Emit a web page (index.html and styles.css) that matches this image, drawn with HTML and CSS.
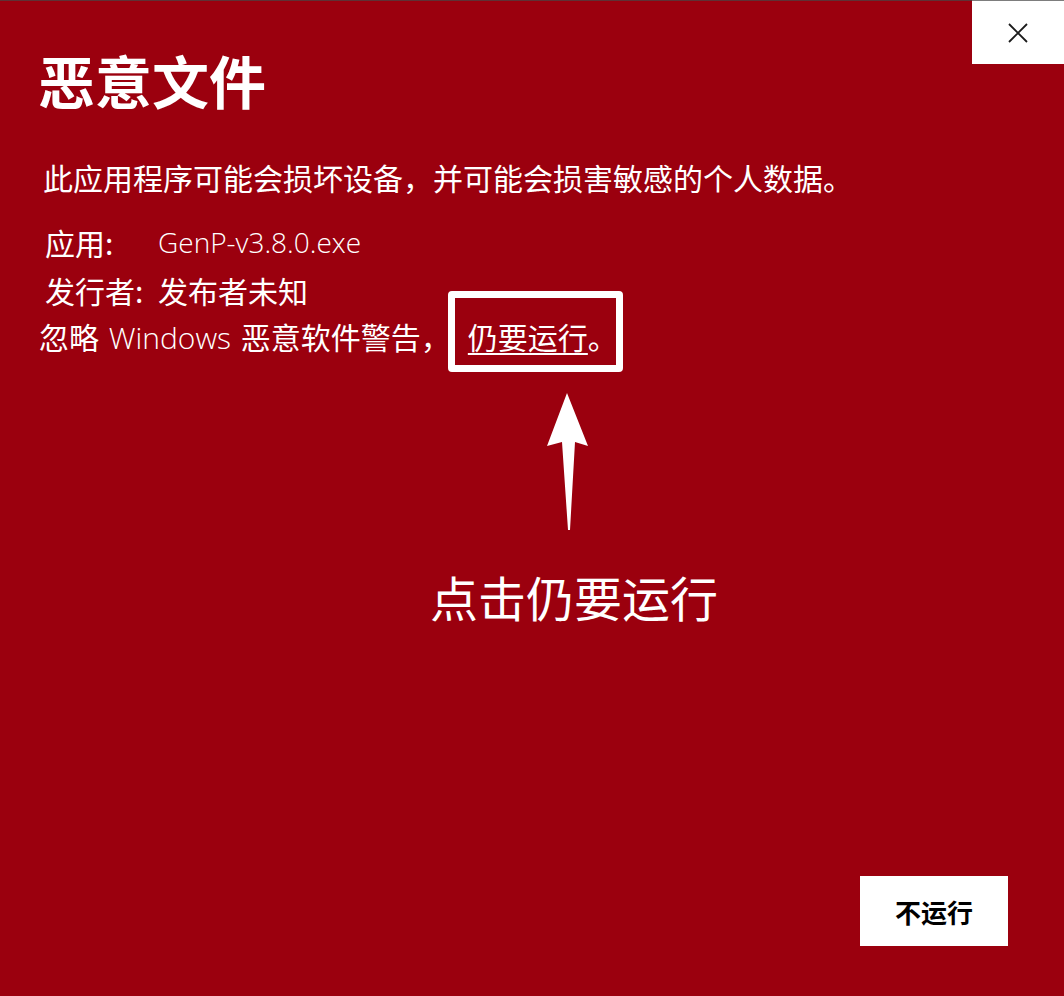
FILE: index.html
```html
<!DOCTYPE html>
<html lang="zh-CN">
<head>
<meta charset="utf-8">
<title>恶意文件</title>
<link rel="stylesheet" href="styles.css">
</head>
<body>
<div class="dialog">
  <button class="close" aria-label="关闭">
    <svg width="20" height="20" viewBox="0 0 20 20"><path d="M1 1 L19 19 M19 1 L1 19" stroke="#1b1b1b" stroke-width="1.8" fill="none"/></svg>
  </button>
  <h1 class="title">恶意文件</h1>
  <p class="subtitle">此应用程序可能会损坏设备，并可能会损害敏感的个人数据。</p>
  <div class="info">
    <span class="label">应用:</span><span class="value latin">GenP-v3.8.0.exe</span>
    <span class="label">发行者:</span><span class="value">发布者未知</span>
  </div>
  <p class="ignore">忽略 <span class="latin">Windows</span> 恶意软件警告，<span class="hl"><a class="run">仍要运行</a>。<span class="hlbox"></span></span></p>
  <svg class="arrow" width="46" height="142" viewBox="0 0 46 142"><path d="M22 3 L43 56 L30 52 L25 140 L23 140 L17 52 L2 56 Z" fill="#fff"/></svg>
  <p class="hint">点击仍要运行</p>
  <div class="actions">
    <button class="norun">不运行</button>
  </div>
</div>
</body>
</html>
```
FILE: styles.css
```css
html, body {
  margin: 0;
  padding: 0;
}
body {
  background: #9b000e;
  font-family: "Noto Sans CJK SC", "Noto Sans", sans-serif;
  color: #fff;
}
.dialog {
  position: relative;
  width: 1064px;
  height: 996px;
  box-sizing: border-box;
  border-top: 1px solid #5f3135;
  background: #9b000e;
  display: flex;
  flex-direction: column;
}
.close {
  position: absolute;
  top: -1px;
  right: 0;
  width: 92px;
  height: 64px;
  border: 0;
  border-top: 1px solid #7d7d7d;
  background: #fff;
  padding: 0;
  display: flex;
  align-items: center;
  justify-content: center;
}
.title {
  margin: 0;
  padding: 45px 0 0 38px;
  font-size: 57px;
  line-height: 66px;
  font-weight: 700;
}
.subtitle {
  margin: 45px 0 0 43px;
  font-size: 30px;
  line-height: 40px;
}
.info {
  margin: 21px 0 0 45px;
  display: grid;
  grid-template-columns: 113px auto;
  font-size: 30px;
  line-height: 48px;
}
.latin {
  font-family: "Open Sans", "Noto Sans", sans-serif;
  font-weight: 300;
}
.info .latin {
  font-size: 28px;
}
.ignore {
  margin: -2px 0 0 39px;
  font-size: 30px;
  line-height: 48px;
}
.ignore .latin {
  font-size: 30px;
  margin: 0 3px;
}
.hl {
  position: relative;
  margin-left: 17px;
}
.run {
  text-decoration: underline;
  text-underline-offset: 4px;
  text-decoration-thickness: 2px;
}
.hlbox {
  position: absolute;
  left: -20px;
  top: -23px;
  width: 161px;
  height: 67px;
  border: 7px solid #fff;
  border-radius: 4px;
}
.arrow {
  display: block;
  margin: 28px 0 0 545px;
}
.hint {
  margin: 34px 0 0 430px;
  font-size: 48px;
  line-height: 60px;
}
.actions {
  margin-top: auto;
  padding: 0 56px 50px 0;
  display: flex;
  justify-content: flex-end;
}
.norun {
  width: 148px;
  height: 70px;
  border: 0;
  background: #fff;
  color: #000;
  font-family: "Noto Sans CJK SC", sans-serif;
  font-size: 26px;
  font-weight: 700;
}
```
